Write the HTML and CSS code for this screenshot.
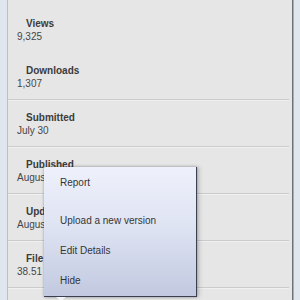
FILE: index.html
```html
<!DOCTYPE html>
<html lang="en">

<head>
  <meta charset="UTF-8">
  <meta name="viewport" content="width=device-width, initial-scale=1.0">
  <title>File Stats</title>

  <link rel="stylesheet" href="styles.css">
</head>

<body>
  <div id="container">
    <div class="side side-left"></div>
    <div id="stats">
      <div class="stat flush">
        <div class="stat-label">Views</div>
        <div class="stat-value">9,325</div>
      </div>
      <div class="stat">
        <div class="stat-label">Downloads</div>
        <div class="stat-value">1,307</div>
      </div>
      <div class="stat">
        <div class="stat-label">Submitted</div>
        <div class="stat-value">July 30</div>
      </div>
      <div class="stat">
        <div class="stat-label">Published</div>
        <div class="stat-value">August 2</div>
      </div>
      <div class="stat">
        <div class="stat-label">Updated</div>
        <div class="stat-value">August 14</div>
      </div>
      <div class="stat">
        <div class="stat-label">File Size</div>
        <div class="stat-value">38.51 MB</div>
      </div>
    </div>
    <div class="side side-right"></div>

    <div id="menu">
      <div class="menu-item gap">Report</div>
      <div class="menu-item">Upload a new version</div>
      <div class="menu-item">Edit Details</div>
      <div class="menu-item">Hide</div>
      <div class="menu-arrow"></div>
    </div>
  </div>
</body>

</html>
```

FILE: styles.css
```css
body {
  margin: 0;
  width: 300px;
  height: 300px;
  overflow: hidden;
  font-family: "Liberation Sans", Arial, sans-serif;
  font-size: 10px;
  line-height: 13px;
}

#container {
  position: relative;
  display: flex;
  height: 300px;
  background: #dfe6ee;
}

.side {
  background: #dfe6ee;
}

.side-left {
  width: 7px;
  border-right: 1px solid #b9c0c7;
}

.side-right {
  width: 7px;
  border-left: 1px solid #6d7277;
  box-shadow: inset 1px 0 0 #a9adb2;
}

#stats {
  flex: 1;
  padding: 8px 3px 0 0;
  background: #e6e6e6;
}

.stat {
  height: 45px;
  padding-top: 9px;
  box-sizing: border-box;
  border-bottom: 1px solid #cbcbcb;
  box-shadow: 0 1px 0 #f0f0f0;
  margin-bottom: 2px;
}

.flush {
  border-bottom-color: transparent;
  box-shadow: none;
}

.stat-label {
  padding-left: 18px;
  font-weight: bold;
  color: #3b3b3b;
}

.stat-value {
  padding-left: 9px;
  color: #474747;
}

/* popup menu */
#menu {
  position: absolute;
  left: 44px;
  top: 167px;
  width: 153px;
  height: 130px;
  padding-top: 1px;
  box-sizing: border-box;

  background: linear-gradient(#eef1fb, #dfe4f3 45%, #c2c9e0);
  border-right: 1px solid #3b4150;
  border-bottom: 1px solid #3b4150;
  border-radius: 2px 0 0 0;
  box-shadow: 0 0 3px rgba(0, 0, 0, 0.35), 3px 0 4px rgba(0, 0, 0, 0.12);
}

.menu-item {
  padding: 8px 16px 9px;
  color: #353535;
  white-space: nowrap;
}

.gap {
  margin-bottom: 8px;
}

.menu-arrow {
  position: absolute;
  left: 12px;
  bottom: -5px;
  width: 0;
  height: 0;
  border-left: 5px solid transparent;
  border-right: 5px solid transparent;
  border-top: 4px solid #f4f6fb;
}
```
